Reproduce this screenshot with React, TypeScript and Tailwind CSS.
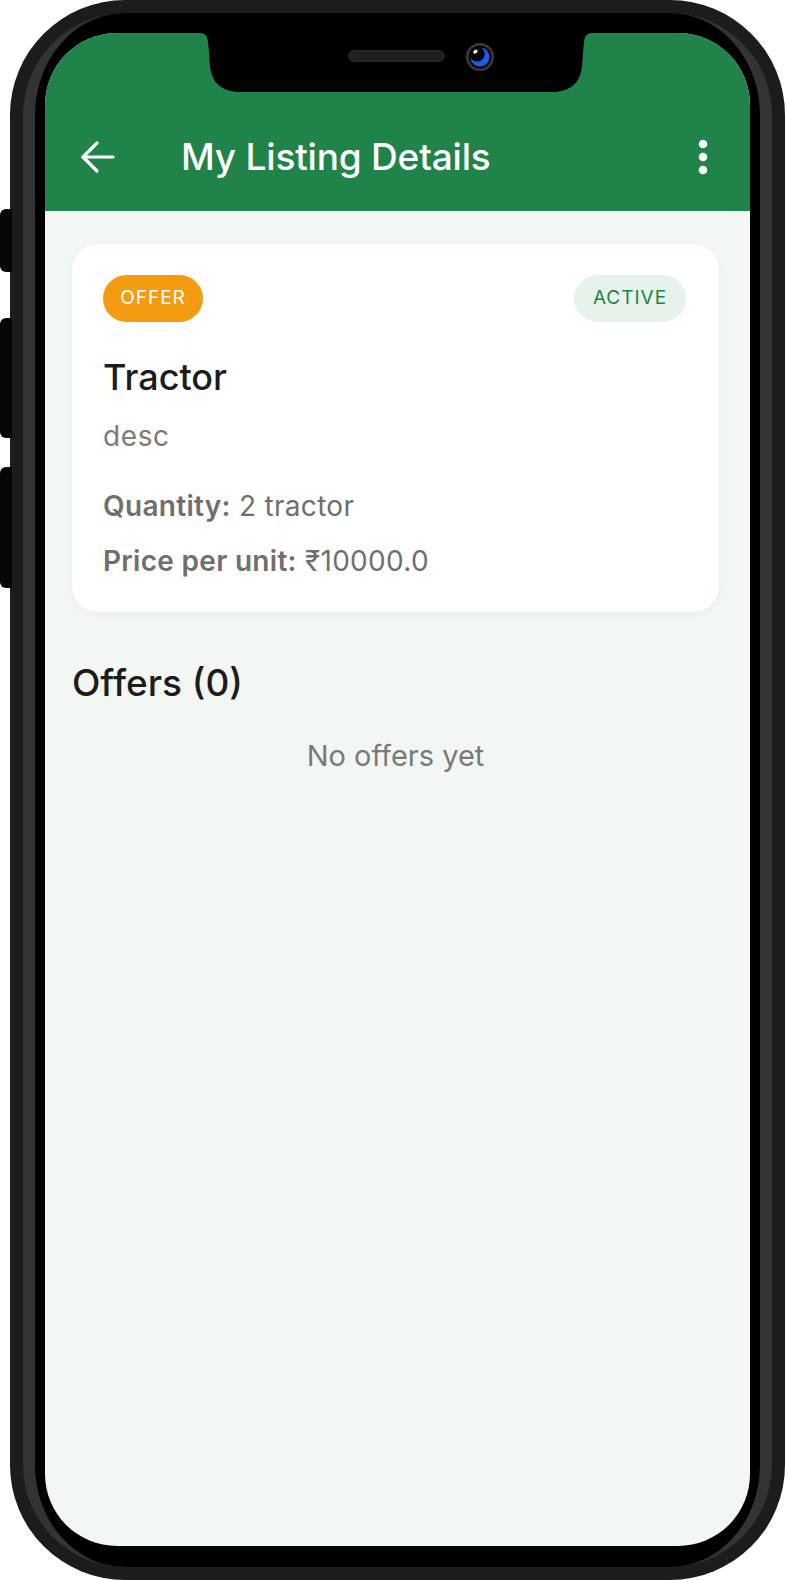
import React from "react";

const font = { fontFamily: "Inter, 'Noto Sans', sans-serif" };

const BackArrow: React.FC = () => (
    <svg width="36" height="36" viewBox="0 0 36 36" fill="none" stroke="white" strokeWidth="3.2" strokeLinecap="round" strokeLinejoin="round">
        <path d="M33 18H3" />
        <path d="M17 4L3 18L17 32" />
    </svg>
);

const DotsIcon: React.FC = () => (
    <svg width="12" height="36" viewBox="0 0 12 36" fill="white">
        <circle cx="6" cy="5" r="4.3" />
        <circle cx="6" cy="18" r="4.3" />
        <circle cx="6" cy="31" r="4.3" />
    </svg>
);

// notch with speaker + front camera
const Notch: React.FC = () => (
    <div className="absolute left-[155px] top-0 w-[392px] h-[60px]">
        <svg width="392" height="60" viewBox="0 0 392 60" className="absolute inset-0">
            <path d="M0 0 C7 0 8 6 8.5 14 L10 34 C12 50 22 59 40 59 L352 59 C370 59 380 50 382 34 L383.5 14 C384 6 385 0 392 0 Z" fill="#000" />
        </svg>
        <div className="absolute left-[148px] top-[17px] w-[97px] h-[12px] rounded-full bg-[#1f1f1f] border border-[#2b2b2b]" />
        <svg width="30" height="30" viewBox="0 0 30 30" className="absolute left-[265px] top-[9px]">
            <circle cx="15" cy="15" r="14" fill="#3a3a3a" />
            <circle cx="15" cy="15" r="11.5" fill="#050505" />
            <circle cx="15" cy="15" r="9.5" fill="#1a5cf2" />
            <circle cx="12.2" cy="12" r="7.6" fill="#050505" />
            <ellipse cx="10.4" cy="9.6" rx="2.4" ry="1.7" transform="rotate(-35 10.4 9.6)" fill="#f4f4f4" />
        </svg>
    </div>
);

const App: React.FC = () => {
    return (
        <div className="relative w-[785px] h-[1580px] bg-white overflow-hidden" style={font}>
            {/* side buttons */}
            <div className="absolute left-0 top-[209px] w-[12px] h-[63px] rounded-l-[6px] bg-[#060606]" />
            <div className="absolute left-0 top-[318px] w-[12px] h-[120px] rounded-l-[6px] bg-[#060606]" />
            <div className="absolute left-0 top-[467px] w-[12px] h-[121px] rounded-l-[6px] bg-[#060606]" />

            <div className="ml-[10px] w-[775px] h-[1580px] rounded-[115px] bg-[#1c1c1c] p-[13px]">
                <div className="w-full h-full rounded-[102px] bg-black border-x-[12px] border-[#333333] pt-[20px] pb-[21px] px-[10px]">
                    <div className="relative w-full h-full rounded-[72px] overflow-hidden bg-[#f3f7f4] flex flex-col">
                        {/* header */}
                        <div className="h-[178px] bg-[#20844a] pt-[96px] shrink-0">
                            <div className="h-[56px] flex items-center pl-[35px] pr-[41px]">
                                <BackArrow />
                                <h1 className="ml-[65px] text-[37px] font-medium text-white tracking-[-0.2px] flex-1">
                                    My Listing Details
                                </h1>
                                <DotsIcon />
                            </div>
                        </div>
                        <Notch />

                        {/* content */}
                        <div className="pl-[27px] pr-[31px] pt-[33px] flex flex-col">
                            <div className="bg-white rounded-[26px] shadow-[0_2px_8px_rgba(0,0,0,0.04)] pt-[31px] pl-[31px] pr-[33px] h-[368px]">
                                <div className="flex justify-between items-center">
                                    <span className="h-[47px] w-[100px] rounded-full bg-[#f39c12] text-white text-[19px] tracking-[1px] flex items-center justify-center">
                                        OFFER
                                    </span>
                                    <span className="h-[47px] w-[112px] rounded-full bg-[#e7f2ea] text-[#20844a] text-[19px] tracking-[1px] flex items-center justify-center">
                                        ACTIVE
                                    </span>
                                </div>
                                <p className="mt-[35px] text-[36px] leading-[40px] font-medium text-[#1c1c1c]">Tractor</p>
                                <p className="mt-[22px] text-[28px] leading-[34px] tracking-[0.6px] text-[#7a7a7a]">desc</p>
                                <p className="mt-[36px] text-[28px] leading-[34px] tracking-[0.3px] text-[#6f6f6f]">
                                    <span className="font-semibold">Quantity:</span> 2 tractor
                                </p>
                                <p className="mt-[21px] text-[28px] leading-[34px] tracking-[0.3px] text-[#6f6f6f]">
                                    <span className="font-semibold">Price per unit:</span> ₹10000.0
                                </p>
                            </div>

                            <h2 className="mt-[49px] text-[37px] leading-[44px] font-medium text-[#1c1c1c]">Offers (0)</h2>
                            <p className="mt-[34px] text-center text-[29px] leading-[34px] text-[#7a7a7a]">No offers yet</p>
                        </div>
                    </div>
                </div>
            </div>
        </div>
    );
};

export default App;
